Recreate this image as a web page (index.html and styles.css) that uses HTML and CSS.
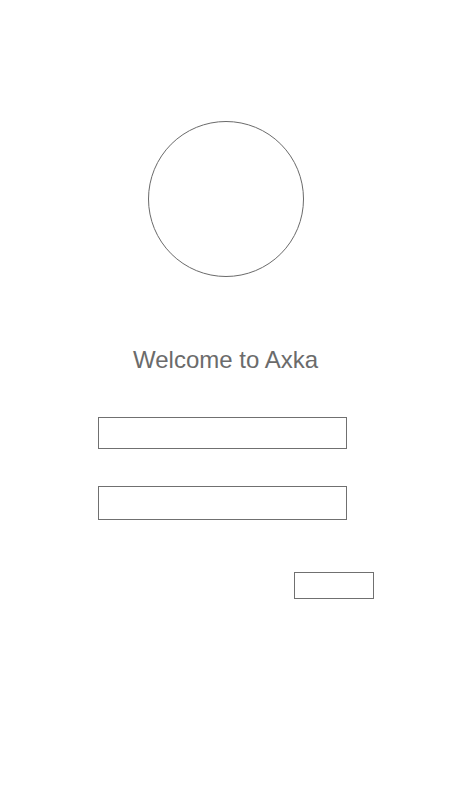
FILE: index.html
```html
<!DOCTYPE html>
<html>
<head>
<meta charset="utf-8">
<link rel="stylesheet" href="styles.css">
</head>
<body>
<main class="page">
  <div class="avatar"></div>
  <h1 class="title">Welcome to Axka</h1>
  <form class="form">
    <input class="field field-user" type="text">
    <input class="field field-pass" type="password">
    <div class="actions">
      <button class="submit" type="button"></button>
    </div>
  </form>
</main>
</body>
</html>
```
FILE: styles.css
```css
html, body {
  margin: 0;
  padding: 0;
  background: #fff;
}
.page {
  display: flex;
  flex-direction: column;
  align-items: center;
  padding-top: 121px;
  font-family: "Liberation Sans", Arial, sans-serif;
}
.avatar {
  width: 156px;
  height: 156px;
  box-sizing: border-box;
  border: 1px solid #6a6a6a;
  border-radius: 50%;
  margin-left: 1px;
}
.title {
  margin: 69px 0 0 1px;
  font-size: 24px;
  line-height: 28px;
  font-weight: normal;
  color: #6b6b6b;
}
.form {
  align-self: stretch;
  display: flex;
  flex-direction: column;
  padding-left: 98px;
  margin-top: 43px;
}
.field {
  box-sizing: border-box;
  width: 249px;
  height: 32px;
  margin: 0;
  padding: 0;
  border: 1px solid #707070;
  background: #fff;
  outline: none;
}
.field-pass {
  margin-top: 37px;
  height: 34px;
}
.actions {
  display: flex;
  padding-left: 196px;
  margin-top: 52px;
}
.submit {
  box-sizing: border-box;
  width: 80px;
  height: 27px;
  margin: 0;
  padding: 0;
  border: 1px solid #707070;
  background: #fff;
}
```
